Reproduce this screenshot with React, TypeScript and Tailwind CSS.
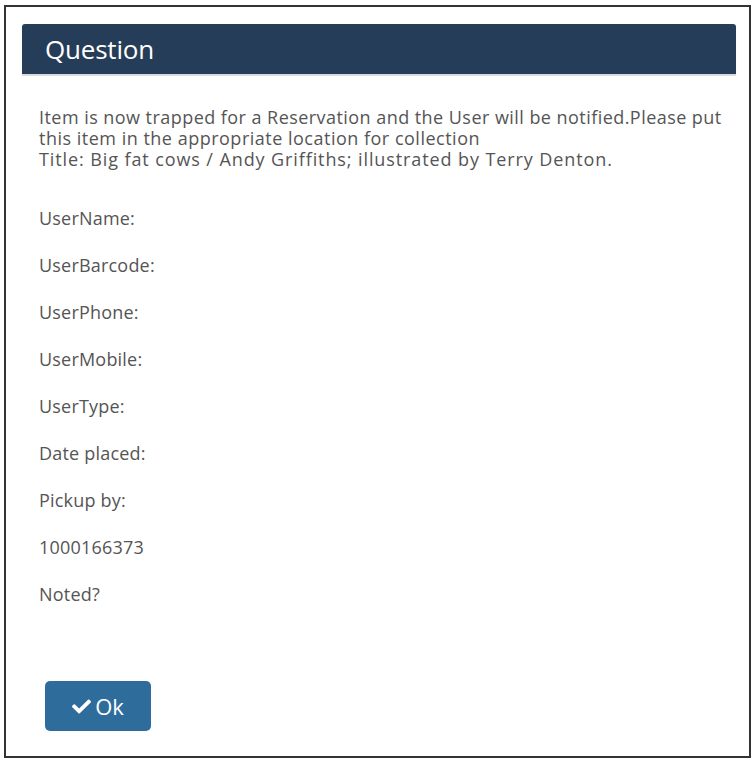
import React from 'react';
import { FaCheck } from 'react-icons/fa';

// Reservation trap confirmation dialog
const rows = [
  'UserName:',
  'UserBarcode:',
  'UserPhone:',
  'UserMobile:',
  'UserType:',
  'Date placed:',
  'Pickup by:',
  '1000166373',
  'Noted?',
];

export default function App() {
  return (
    <div className="w-[756px] h-[764px] bg-white pt-[5px] pl-[4px]" style={{ fontFamily: '"Open Sans", "Noto Sans", sans-serif' }}>
      <div className="w-[747px] h-[753px] border-2 border-[#333333] pt-[17px]">
        {/* Header */}
        <div className="ml-[16px] w-[714px] h-[50px] bg-[#253d58] rounded-t-[3px] shadow-[0_2px_1px_rgba(0,0,0,0.15)] flex items-center pl-[23px]">
          <h2 className="text-white text-[26px] leading-none tracking-[-0.2px]">Question</h2>
        </div>

        {/* Body */}
        <div className="pl-[33px] pt-[33px] text-[#555555] text-[18px] leading-[21px] tracking-[0.45px] whitespace-nowrap">
          <div>Item is now trapped for a Reservation and the User will be notified.Please put</div>
          <div className="tracking-[0.5px]">this item in the appropriate location for collection</div>
          <div className="tracking-[0.9px]">Title: Big fat cows / Andy Griffiths; illustrated by Terry Denton.</div>

          <div className="mt-[38px] flex flex-col gap-[26px] tracking-[0.2px]">
            {rows.map((r) => (
              <div key={r}>{r}</div>
            ))}
          </div>
        </div>

        {/* Footer */}
        <div className="pl-[39px] mt-[76px]">
          <button
            type="button"
            className="w-[106px] h-[50px] bg-[#2e6d9b] rounded-[5px] text-white text-[22px] flex items-center justify-center gap-[4px]"
          >
            <FaCheck className="w-[19px] h-[19px]" />
            <span>Ok</span>
          </button>
        </div>
      </div>
    </div>
  );
}
